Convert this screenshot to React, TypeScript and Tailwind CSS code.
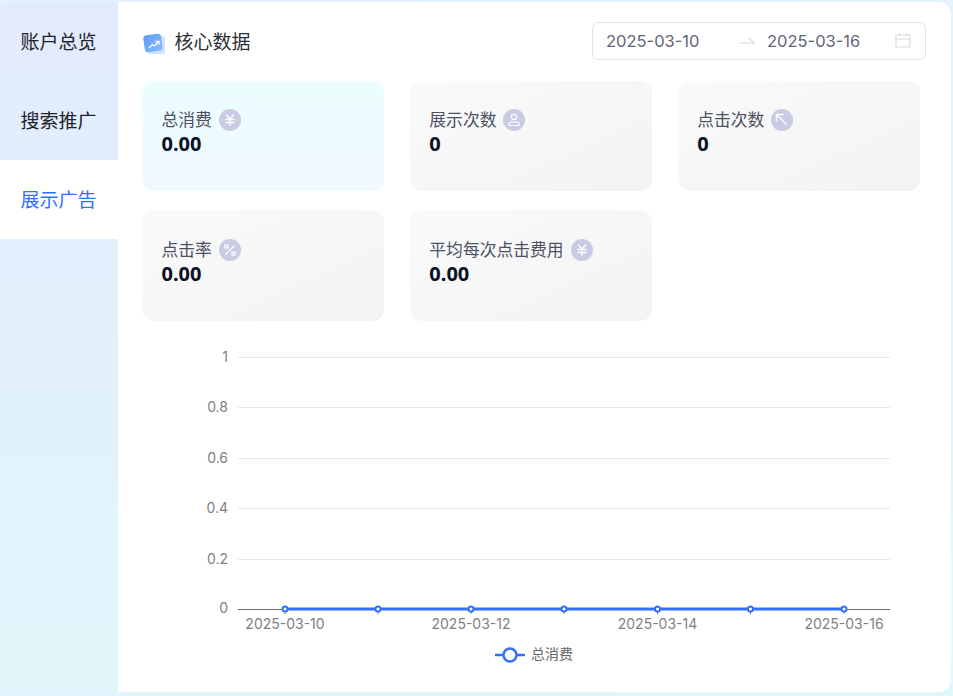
import { FC, ReactNode } from 'react';

const font = { fontFamily: '"Noto Sans", "Noto Sans CJK SC", sans-serif' };
const latin = { fontFamily: 'Inter, "Noto Sans CJK SC", sans-serif' };

const yuan = (
  <path d="M7 5.5 11 10l4-4.500M6.500 10.500h9M6.500 13.500h9M11 10v7" fill="none" stroke="#fff" strokeWidth="1.300" />
);
const user = (
  <g fill="none" stroke="#fff" strokeWidth="1.200">
    <circle cx="11" cy="8" r="2.700" />
    <path d="M6 16.500v-1.300c0-1.300 1-2.200 2.200-2.200h5.600c1.200 0 2.200.9 2.200 2.200v1.300z" />
  </g>
);
const arrow = <path d="M5.500 5.500h7M5.500 5.500v7M5.500 5.500l10 10" fill="none" stroke="#fff" strokeWidth="1.400" />;
const percent = (
  <g fill="none" stroke="#fff" strokeWidth="1.200">
    <path d="M15.500 6.500l-9 9" />
    <rect x="6" y="6" width="3" height="3" />
    <rect x="13" y="13" width="3" height="3" />
  </g>
);

const stats: { label: string; value: string; icon: ReactNode; active?: boolean }[] = [
  { label: '总消费', value: '0.00', icon: yuan, active: true },
  { label: '展示次数', value: '0', icon: user },
  { label: '点击次数', value: '0', icon: arrow },
  { label: '点击率', value: '0.00', icon: percent },
  { label: '平均每次点击费用', value: '0.00', icon: yuan },
];

const StatCard: FC<(typeof stats)[number]> = ({ label, value, icon, active }) => (
  <div
    className={
      active
        ? 'flex flex-col justify-center rounded-xl bg-gradient-to-b from-[#ebfdfe] to-[#f0f9fe] pb-[8px] pl-[19.5px]'
        : 'flex flex-col justify-center rounded-xl bg-gradient-to-br from-[#f9fafa] to-[#f3f3f4] pb-[8px] pl-[19.5px]'
    }
  >
    <div className="flex h-6 items-center gap-[7px] text-[16.800px] leading-6 text-[#4d5163]">
      <span>{label}</span>
      <svg width="22" height="22" viewBox="0 0 22 22" className="shrink-0">
        <circle cx="11" cy="11" r="11" fill="#c8cbe3" />
        {icon}
      </svg>
    </div>
    <div className="text-[20px] font-bold leading-6 text-[#0b1025]">{value}</div>
  </div>
);

const ticks = [
  { y: 357, label: '1' },
  { y: 407, label: '0.8' },
  { y: 458, label: '0.6' },
  { y: 508, label: '0.4' },
  { y: 559, label: '0.2' },
];
const points = [285, 378, 471, 564, 657.5, 750.5, 844];
const dates = [
  { x: 285, label: '2025-03-10' },
  { x: 471, label: '2025-03-12' },
  { x: 657.5, label: '2025-03-14' },
  { x: 844, label: '2025-03-16' },
];

const Chart: FC = () => (
  <svg width="811" height="336" viewBox="118 336 811 336" className="block" style={latin}>
    {ticks.map(t => (
      <g key={t.y}>
        <line x1="238" x2="890" y1={t.y + 0.5} y2={t.y + 0.5} stroke="#e6e6f0" />
        <text x="228" y={t.y + 5} textAnchor="end" fontSize="14" fill="#7f7f85">
          {t.label}
        </text>
      </g>
    ))}
    <text x="228" y="613" textAnchor="end" fontSize="14" fill="#7f7f85">
      0
    </text>
    <line x1="238" x2="890" y1="609.5" y2="609.5" stroke="#6e7079" />
    {points.map(x => (
      <line key={x} x1={x} x2={x} y1="609" y2="614" stroke="#6e7079" />
    ))}
    <line x1="285" x2="844" y1="609" y2="609" stroke="#3370ff" strokeWidth="3" />
    {points.map(x => (
      <circle key={x} cx={x} cy="609" r="2.500" fill="#fff" stroke="#3370ff" strokeWidth="2" />
    ))}
    {dates.map(d => (
      <text key={d.x} x={d.x} y="629" textAnchor="middle" fontSize="14" fill="#7f7f85">
        {d.label}
      </text>
    ))}
    <line x1="495" x2="525" y1="655" y2="655" stroke="#3370ff" strokeWidth="2.500" />
    <circle cx="510" cy="655" r="6.500" fill="#fff" stroke="#3370ff" strokeWidth="2.500" />
    <text x="531" y="659" fontSize="14" fill="#666" style={font}>
      总消费
    </text>
  </svg>
);

const App: FC = () => (
  <div
    className="h-[696px] w-[953px] overflow-hidden bg-gradient-to-br from-[#e4effd] to-[#e0f8fc] pb-[4px] pr-[2px] pt-[2px]"
    style={font}
  >
    <div className="flex h-[690px] overflow-hidden rounded-xl bg-gradient-to-b from-[#e2ebfd] to-[#e1f6fb]">
      <div className="w-[118px] shrink-0 text-[19px] text-[#1f2329]">
        <div className="flex h-[79px] items-center pl-[20.5px] pt-[2px]">账户总览</div>
        <div className="flex h-[79px] items-center pl-[20.5px] pt-[2px]">搜索推广</div>
        <div className="flex h-[79px] items-center bg-white pl-[20.5px] pt-[2px] text-[#3370ff]">展示广告</div>
      </div>
      <div className="min-w-0 flex-1 bg-white pl-6">
        <div className="flex h-[79px] items-center justify-between pr-[25px]">
          <div className="flex items-center gap-[8.5px] pt-[2px] text-[19px] text-[#2b2f36]">
            <svg width="24" height="24" viewBox="0 0 24 24" className="shrink-0">
              <defs>
                <linearGradient id="logo" x1="0" y1="0" x2="1" y2="1">
                  <stop offset="0" stopColor="#5b9bf8" />
                  <stop offset="1" stopColor="#8dbcfb" />
                </linearGradient>
              </defs>
              <rect x="5" y="5" width="18" height="18" rx="3" fill="#cfe3fe" />
              <rect x="2" y="3.5" width="18" height="17" rx="3.5" fill="url(#logo)" transform="rotate(-8 11 12)" />
              <path d="M7 17l3.500-3.500 2 1.500 4-4M13.500 10.500h3.500v3" fill="none" stroke="#fff" strokeWidth="1.300" />
            </svg>
            <span>核心数据</span>
          </div>
          <div
            className="mb-[2px] flex h-[38px] w-[334px] items-center rounded-md border border-[#e2e3ea] pl-[13px] text-[16.500px] text-[#5f6478]"
            style={latin}
          >
            <span className="w-[134px] pt-[2px]">2025-03-10</span>
            <svg width="15" height="8" viewBox="0 0 15 8" className="mr-[12px] shrink-0">
              <path d="M0 6h14L9 1" fill="none" stroke="#d5d6de" strokeWidth="1.200" />
            </svg>
            <span className="w-[128px] pt-[2px]">2025-03-16</span>
            <svg width="16" height="16" viewBox="0 0 16 16" className="mb-[2px] shrink-0">
              <path d="M1 3h14v12H1zM1 7h14M4.500 1v3M11.500 1v3" fill="none" stroke="#d9dae2" strokeWidth="1.200" />
            </svg>
          </div>
        </div>
        <div className="grid w-[778px] grid-cols-3 grid-rows-[110px_111px] gap-x-[25.5px] gap-y-[19px]">
          {stats.map(s => (
            <StatCard key={s.label} {...s} />
          ))}
        </div>
        <div className="mt-[15px] -ml-6">
          <Chart />
        </div>
      </div>
    </div>
  </div>
);

export default App;
